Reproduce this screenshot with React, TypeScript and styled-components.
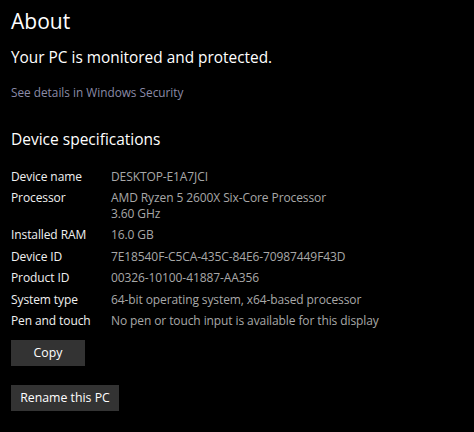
import React from "react";
import styled, { createGlobalStyle } from "styled-components";

const Global = createGlobalStyle`
  html, body { margin: 0; padding: 0; background: #000; }
  body { font-family: "Open Sans", "Noto Sans", sans-serif; -webkit-font-smoothing: antialiased; }
  #root { min-height: 432px; }
`;

const Page = styled.div`
  background: #000;
  color: #fff;
  width: 474px;
  height: 432px;
  box-sizing: border-box;
  padding: 7px 11px 0 11px;
  overflow: hidden;
`;

const Title = styled.h1`
  margin: 0;
  font-weight: 400;
  font-size: 21px;
  line-height: 28px;
  color: #fff;
`;

const Status = styled.div`
  margin-top: 13px;
  font-size: 15.4px;
  line-height: 20px;
  color: #fff;
`;

const Link = styled.a`
  display: block;
  margin-top: 16px;
  font-size: 11.8px;
  line-height: 16px;
  color: #8b8ba8;
  text-decoration: none;
`;

const SectionTitle = styled.h2`
  margin: 28px 0 0 0;
  font-weight: 400;
  font-size: 15.5px;
  line-height: 22px;
  color: #fff;
`;

const Specs = styled.dl`
  margin: 18.5px 0 0 0;
  display: grid;
  grid-template-columns: 100px 1fr;
  row-gap: 5.2px;
  font-size: 12px;
  line-height: 16.2px;
  letter-spacing: -0.1px;
`;

const Label = styled.dt`
  margin: 0;
  color: #f0f0f0;
`;

const Value = styled.dd`
  margin: 0;
  color: #a8a8a8;
`;

const Actions = styled.div`
  display: flex;
  flex-direction: column;
  align-items: flex-start;
  gap: 19px;
  margin-top: 10.5px;
`;

const Button = styled.button<{ $w: number }>`
  width: ${(p) => p.$w}px;
  height: 26px;
  padding: 0;
  border: none;
  border-radius: 0;
  background: #333333;
  color: #fff;
  font-family: "Open Sans", "Noto Sans", sans-serif;
  font-size: 12.3px;
  line-height: 26px;
  text-align: center;
  cursor: pointer;
`;

const specs: [string, string[]][] = [
  ["Device name", ["DESKTOP-E1A7JCI"]],
  ["Processor", ["AMD Ryzen 5 2600X Six-Core Processor", "3.60 GHz"]],
  ["Installed RAM", ["16.0 GB"]],
  ["Device ID", ["7E18540F-C5CA-435C-84E6-70987449F43D"]],
  ["Product ID", ["00326-10100-41887-AA356"]],
  ["System type", ["64-bit operating system, x64-based processor"]],
  ["Pen and touch", ["No pen or touch input is available for this display"]],
];

export default function App() {
  return (
    <>
      <Global />
      <Page>
        <Title>About</Title>
        <Status>Your PC is monitored and protected.</Status>
        <Link href="#">See details in Windows Security</Link>
        <SectionTitle>Device specifications</SectionTitle>
        <Specs>
          {specs.map(([k, v]) => (
            <React.Fragment key={k}>
              <Label>{k}</Label>
              <Value>
                {v.map((line, i) => (
                  <div key={i}>{line}</div>
                ))}
              </Value>
            </React.Fragment>
          ))}
        </Specs>
        <Actions>
          <Button $w={74}>Copy</Button>
          <Button $w={108}>Rename this PC</Button>
        </Actions>
      </Page>
    </>
  );
}
